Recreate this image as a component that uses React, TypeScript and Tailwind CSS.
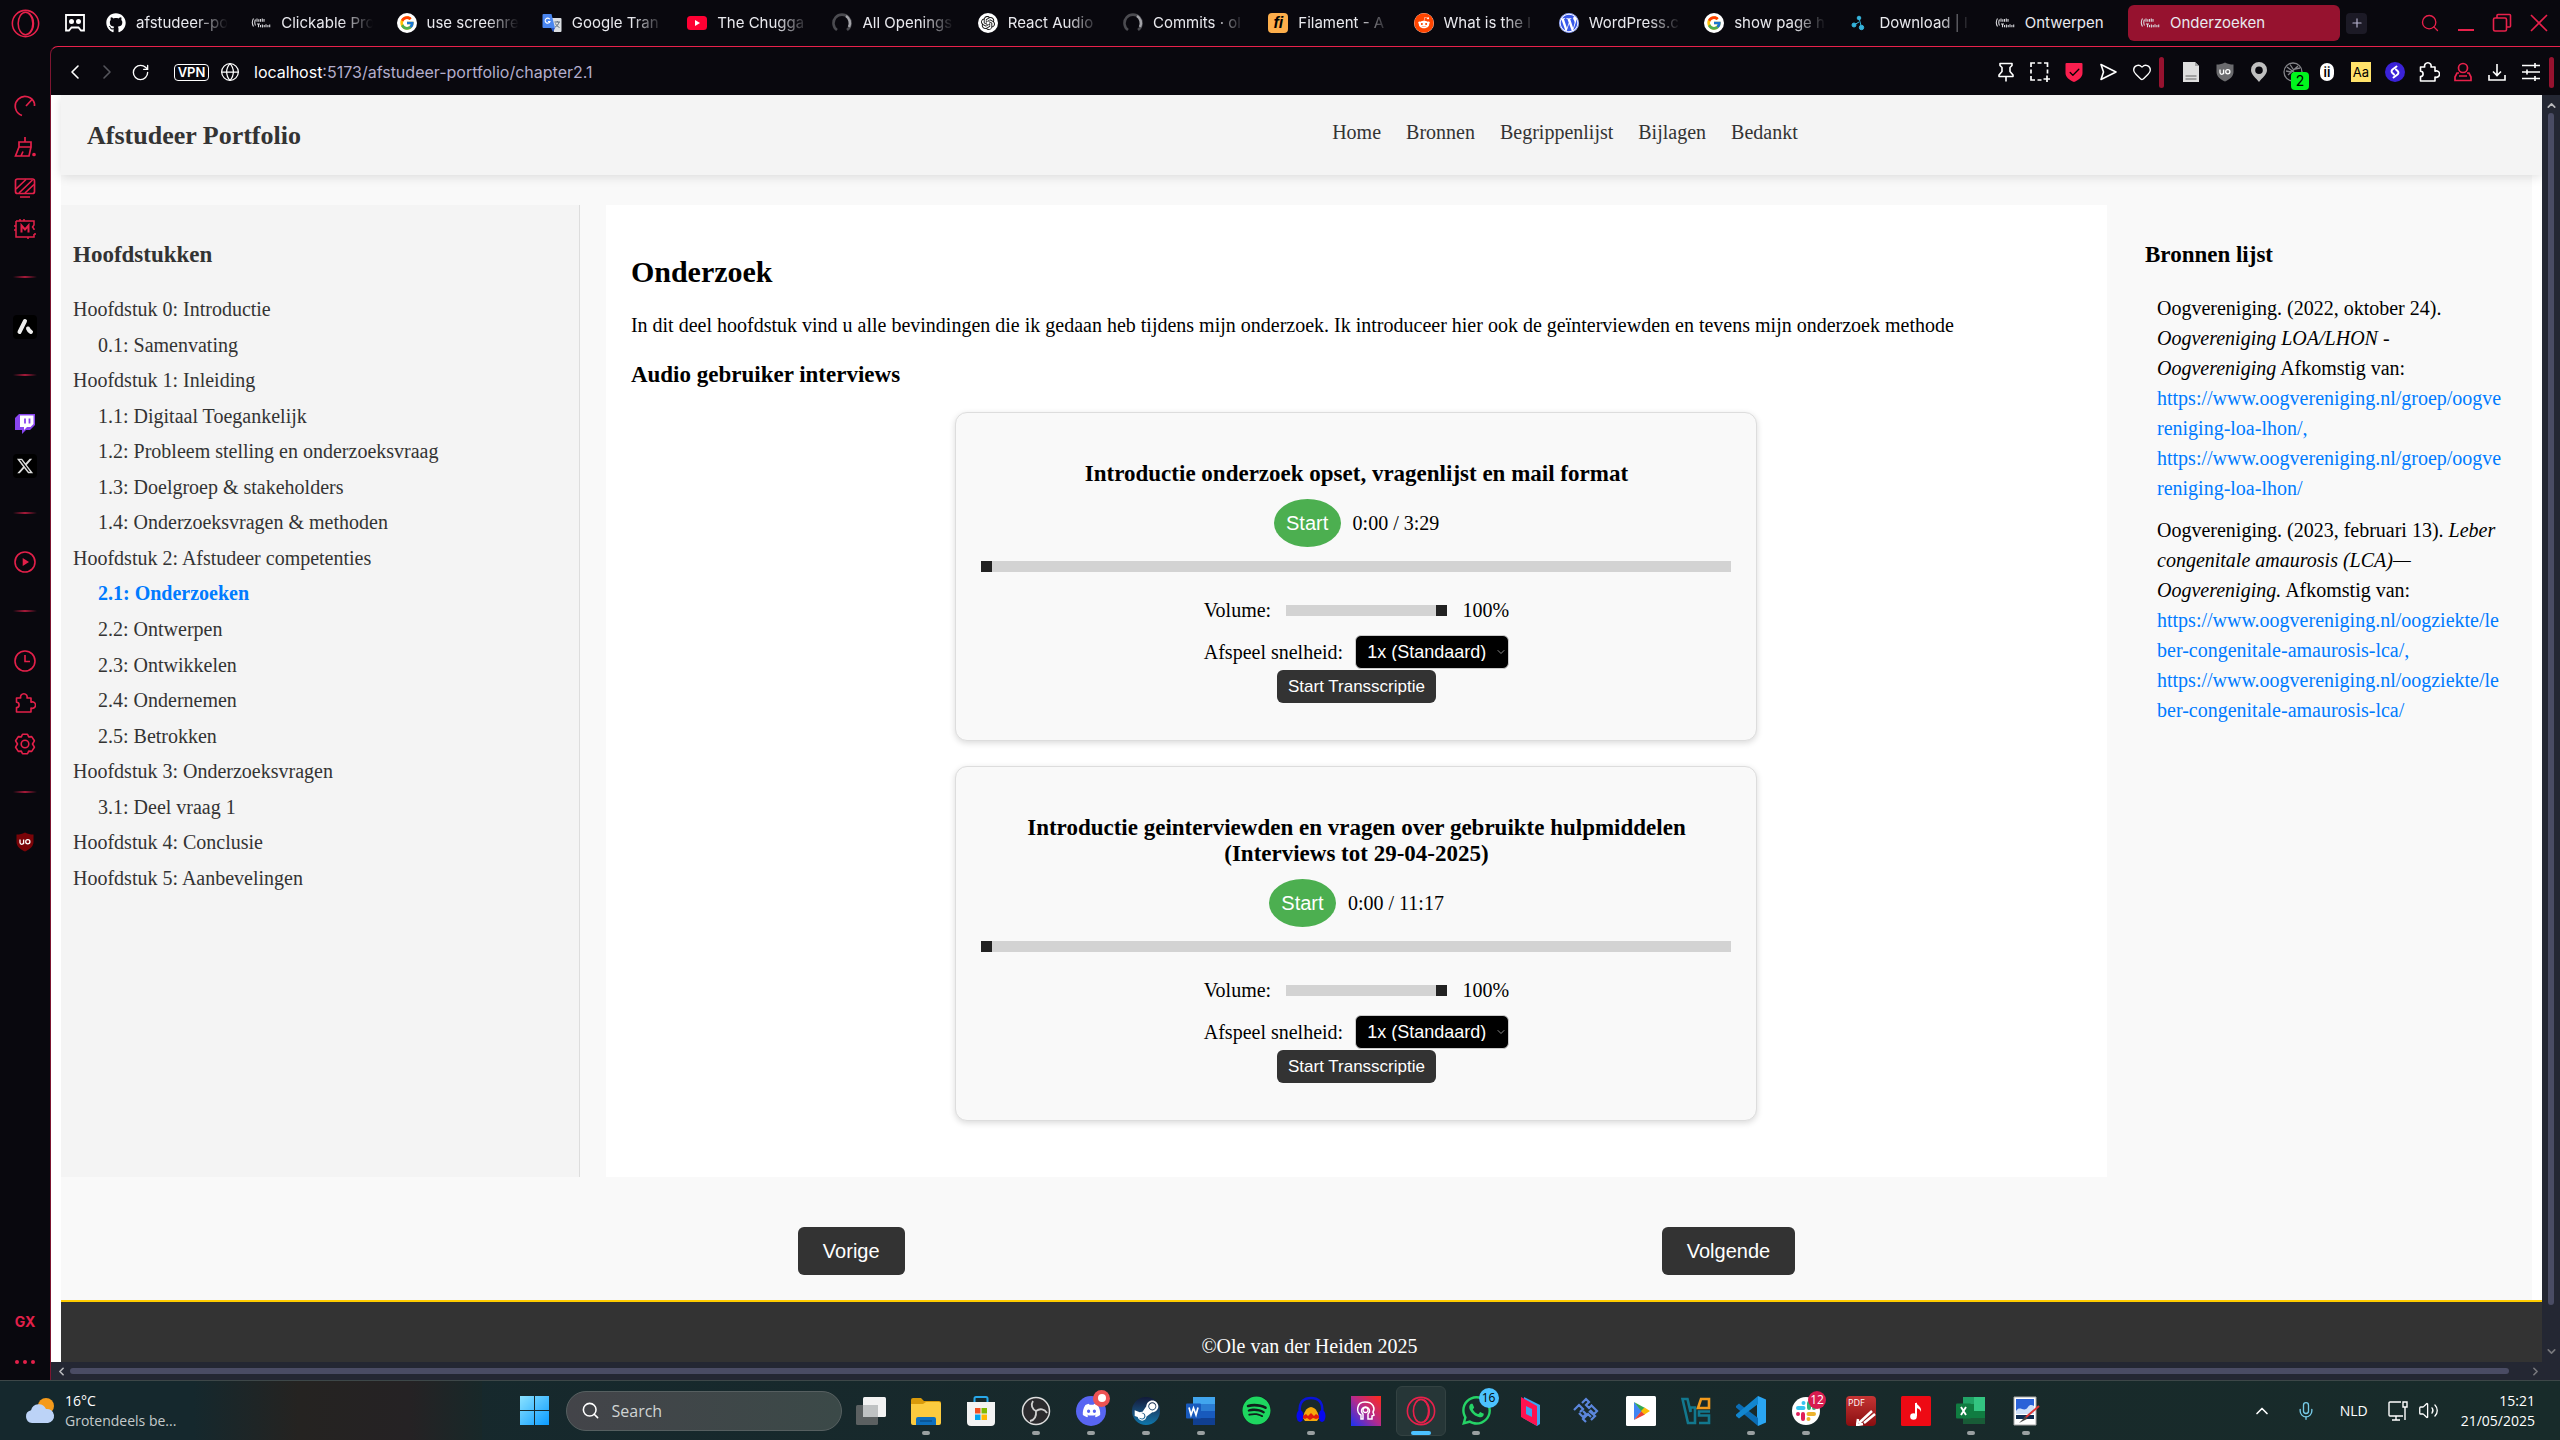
import type { ReactNode } from 'react';
import {
  ChevronLeft, ChevronRight, ChevronUp, ChevronDown, RotateCw, Globe, Search, X, Plus, Heart,
  Check, Mic, Volume2,
} from 'lucide-react';
import { FaGithub, FaReddit, FaWordpress, FaDiscord, FaSteamSymbol, FaSpotify, FaWhatsapp } from 'react-icons/fa';
import { FaXTwitter } from 'react-icons/fa6';
import { FcGoogle } from 'react-icons/fc';
import { SiOpenai } from 'react-icons/si';

/* ---------- small drawings ---------- */

const OperaRing = ({ size = 28 }: { size?: number }) => (
  <svg width={size} height={size} viewBox="0 0 30 30" fill="none" stroke="#e8214b" strokeWidth="1.6">
    <circle cx="15" cy="15" r="13.6" />
    <ellipse cx="15" cy="15" rx="7.6" ry="11.6" />
    <path d="M18 4c7 5 7 17 0 22" />
  </svg>
);

const PinnedFace = () => (
  <svg width="22" height="18" viewBox="0 0 22 18" fill="none" stroke="#fff" strokeWidth="1.8">
    <path d="M2 1h18v15.500h-3l-2.500-3h-7l-2.500 3H2z" />
    <circle cx="7.500" cy="7.500" r="1.600" fill="#fff" />
    <circle cx="14.500" cy="7.500" r="1.600" fill="#fff" />
  </svg>
);

const DigitalLogo = () => (
  <svg width="20" height="20" viewBox="0 0 20 20" fill="none" stroke="#d9d9dd" strokeWidth="1.100">
    <path d="M2.500 5.500c-1.500 2.500-1.500 5.500 0 8M4.500 6.500c-1 2-1 4 0 6" />
    <path d="M6 5.500v3.200M7.800 6.200v2.500M9.500 6v2.700M11.300 5.400v3.300M13 6v2.700" />
    <path d="M6 11h3M7.500 11v3.200M9.500 12v2.200M11.400 11.500v3M13.200 12v2.200M15 11.200v3M16.900 12v2.200M18.700 11.500v2.700" />
  </svg>
);

const TranslateLogo = () => (
  <svg width="20" height="20" viewBox="0 0 20 20">
    <path d="M8 5h10.500a1 1 0 011 1v12a1 1 0 01-1 1H12z" fill="#dcdfe3" />
    <path d="M1.500 1h8L13 15H1.500a1 1 0 01-1-1V2a1 1 0 011-1z" fill="#4a86f0" />
    <path d="M9 15h4l-2 4z" fill="#2a56c6" />
    <path d="M7.800 6.300A2.500 2.500 0 108 8.500H6" fill="none" stroke="#fff" strokeWidth="1.100" />
    <path d="M12.500 9h5.500M15.300 8v1M17 9c-.5 2.500-2 4-4 5.200M13.500 10.500c.8 1.800 2 3 4 4" fill="none" stroke="#5b6b7c" strokeWidth="1" />
  </svg>
);

const YoutubeLogo = () => (
  <svg width="20" height="20" viewBox="0 0 20 20">
    <rect x="0" y="3" width="20" height="14" rx="3.500" fill="#ff0033" />
    <path d="M8 7l5 3-5 3z" fill="#fff" />
  </svg>
);

const LoadingRing = () => (
  <svg width="20" height="20" viewBox="0 0 20 20" fill="none" strokeWidth="2.600">
    <path d="M5 17A8.500 8.500 0 1115 17" stroke="#4b4b50" />
    <path d="M14 3a8.500 8.500 0 013 11" stroke="#a3a3a8" />
  </svg>
);

const FilamentLogo = () => (
  <span className="flex size-5 items-center justify-center rounded-sm bg-[#fdae4b] font-['Liberation_Sans',sans-serif] text-base leading-none font-bold text-black italic">fi</span>
);

const DownloadLogo = () => (
  <svg width="20" height="20" viewBox="0 0 20 20" fill="#35b4dc" stroke="#35b4dc">
    <circle cx="10" cy="5" r="1.800" />
    <circle cx="5" cy="12" r="2" />
    <circle cx="12.500" cy="14.500" r="2.200" />
    <path d="M10 5l2.500 9.500M5 12l5-3" strokeWidth="1" />
  </svg>
);

const PuzzlePiece = () => (
  <svg width="22" height="22" viewBox="0 0 22 22" fill="none" stroke="currentColor" strokeWidth="1.600" strokeLinejoin="round">
    <path d="M2.500 6h4.200a3.300 3.300 0 116.300 0H17v4.200a3.200 3.200 0 110 5.800v4H2.500v-4.500a2.600 2.600 0 000-5.200z" />
  </svg>
);

const Shield = ({ fill, size = 20 }: { fill: string; size?: number }) => (
  <svg width={size} height={size} viewBox="0 0 20 20">
    <path d="M10 0.500c3 1.500 5 2 8.500 2V10c0 4.500-4 7.500-8.500 9.500C5.500 17.500 1.500 14.500 1.500 10V2.500c3.500 0 5.500-.5 8.500-2z" fill={fill} />
    <path d="M5 7.500v3a1.800 1.800 0 003.600 0v-3M8.600 7.500v4.500" fill="none" stroke="#fff" strokeWidth="1.300" />
    <circle cx="12.800" cy="9.700" r="2.100" fill="none" stroke="#fff" strokeWidth="1.300" />
  </svg>
);

/* ---------- tab strip ---------- */

type Tab = { icon: ReactNode; title: string; fade?: boolean };

const tabs: Tab[] = [
  { icon: <FaGithub size={20} color="#fff" />, title: 'afstudeer-po', fade: true },
  { icon: <DigitalLogo />, title: 'Clickable Pro', fade: true },
  { icon: <span className="flex size-5 items-center justify-center rounded-full bg-white"><FcGoogle size={16} /></span>, title: 'use screenre', fade: true },
  { icon: <TranslateLogo />, title: 'Google Tran', fade: true },
  { icon: <YoutubeLogo />, title: 'The Chugga', fade: true },
  { icon: <LoadingRing />, title: 'All Openings', fade: true },
  { icon: <span className="flex size-5 items-center justify-center rounded-full bg-white"><SiOpenai size={14} color="#111" /></span>, title: 'React Audio', fade: true },
  { icon: <LoadingRing />, title: 'Commits · ol', fade: true },
  { icon: <FilamentLogo />, title: 'Filament - A', fade: true },
  { icon: <span className="flex size-5 items-center justify-center rounded-full bg-white"><FaReddit size={20} color="#ff4500" /></span>, title: 'What is the l', fade: true },
  { icon: <span className="flex size-5 items-center justify-center rounded-full bg-white"><FaWordpress size={20} color="#3858e9" /></span>, title: 'WordPress.c', fade: true },
  { icon: <span className="flex size-5 items-center justify-center rounded-full bg-white"><FcGoogle size={16} /></span>, title: 'show page h', fade: true },
  { icon: <DownloadLogo />, title: 'Download | l', fade: true },
  { icon: <DigitalLogo />, title: 'Ontwerpen' },
];

function TabStrip() {
  return (
    <div className="flex h-[46px] items-center text-[15px] text-[#e9e9ee]">
      <button aria-label="Opera menu" className="flex w-[50px] justify-center"><OperaRing size={29} /></button>
      <button aria-label="Vastgezet tabblad" className="flex w-14 justify-center pr-1.5"><PinnedFace /></button>
      <div className="-mr-3 grid min-w-0 flex-1 grid-cols-14">
        {tabs.map((t, i) => (
          <button key={i} className="flex min-w-0 items-center gap-2.5 text-left">
            <span className="shrink-0">{t.icon}</span>
            <span className={t.fade ? 'w-[92px] overflow-hidden whitespace-nowrap [mask-image:linear-gradient(to_right,black_65%,transparent)]' : 'whitespace-nowrap'}>{t.title}</span>
          </button>
        ))}
      </div>
      <button className="relative flex h-9 w-[212px] items-center gap-2.5 rounded-md bg-[#96122f] pl-3 text-left">
        <DigitalLogo />Onderzoeken
      </button>
      <button aria-label="Nieuw tabblad" className="ml-1.5 flex size-[21px] items-center justify-center rounded-sm bg-[#1c1a26] text-[#b7b3cf]"><Plus size={14} /></button>
      <div className="ml-[53px] flex items-center gap-[18px] pr-3 text-[#e8214b]">
        <button aria-label="Zoeken"><Search size={20} strokeWidth={1.6} /></button>
        <button aria-label="Minimaliseren" className="flex h-4 items-end"><span className="block h-0.5 w-4 bg-current" /></button>
        <button aria-label="Herstellen">
          <svg width="20" height="20" viewBox="0 0 20 20" fill="none" stroke="currentColor" strokeWidth="1.600"><rect x="1.500" y="5" width="13" height="13" rx="1.500" /><path d="M5 5V2.500A1 1 0 016 1.500h11.500a1 1 0 011 1V13a1 1 0 01-1 1h-3" /></svg>
        </button>
        <button aria-label="Sluiten">
          <svg width="18" height="18" viewBox="0 0 18 18" fill="none" stroke="currentColor" strokeWidth="1.600"><path d="M1 1l16 16M17 1L1 17" /></svg>
        </button>
      </div>
    </div>
  );
}

/* ---------- address bar ---------- */

const extensions: { label: string; icon: ReactNode }[] = [
  { label: 'Leesmodus', icon: <svg width="18" height="20" viewBox="0 0 18 20"><path d="M1 0h12l4 4v16H1z" fill="#dedede" /><path d="M3.500 14h11M3.500 17h11" stroke="#8c8c8c" strokeWidth="1.400" /><path d="M13 0v4h4" fill="#a5a5a5" /></svg> },
  { label: 'uBlock', icon: <Shield fill="#6b6b6e" /> },
  { label: 'Locatie', icon: <svg width="18" height="20" viewBox="0 0 18 20"><path fillRule="evenodd" d="M9 0a8 8 0 018 8c0 4.500-5 8-8 12C6 16 1 12.500 1 8a8 8 0 018-8zm0 4.500a3.800 3.800 0 100 7.600 3.800 3.800 0 000-7.600z" fill="#bfbfbf" /></svg> },
  { label: 'Cookies', icon: (
    <span className="relative block">
      <svg width="20" height="20" viewBox="0 0 20 20" fill="none" stroke="#85858a" strokeWidth="1.300"><circle cx="10" cy="10" r="9" /><path d="M4 5l12 9M15 4L5 13M7 2.500l4 6M3 9l5 1M12 7l5-1" /></svg>
      <span className="absolute -right-1.5 -bottom-2 flex size-[18px] items-center justify-center rounded-sm bg-[#00f51d] text-sm leading-none text-black">2</span>
    </span>
  ) },
  { label: 'Info', icon: <span className="flex h-[18px] w-3.5 items-center justify-center rounded-full bg-white text-[13px] leading-none font-semibold text-black">ii</span> },
  { label: 'Lettertype', icon: <span className="flex size-5 items-center justify-center bg-[#ffe26a] text-[13px] leading-none text-black">Aa</span> },
  { label: 'Shazam', icon: <svg width="20" height="20" viewBox="0 0 20 20"><circle cx="10" cy="10" r="10" fill="#3a22d8" /><path d="M11.500 4.500L7.500 7.500a2.200 2.200 0 00-.3 3.300l1.800 1.700M8.500 15.500l4-3a2.200 2.200 0 00.3-3.300L11 7.500" fill="none" stroke="#fff" strokeWidth="2" strokeLinecap="round" /></svg> },
  { label: 'Extensies', icon: <PuzzlePiece /> },
  { label: 'Profiel', icon: <svg width="18" height="20" viewBox="0 0 18 20" fill="none" stroke="#e8214b" strokeWidth="1.700"><circle cx="9" cy="6" r="4.500" /><path d="M5 11H3l-2 4v3.500h16V15l-2-4h-2M5 14h8" /></svg> },
  { label: 'Downloads', icon: <svg width="18" height="18" viewBox="0 0 18 18" fill="none" stroke="currentColor" strokeWidth="1.600"><path d="M9 1v11M5 8.500L9 12.500l4-4M1 12v5h16v-5" /></svg> },
  { label: 'Instellingen', icon: <svg width="20" height="20" viewBox="0 0 20 20" stroke="currentColor" strokeWidth="1.600"><path d="M1 3.500h18M1 10h18M1 16.500h18M14 1v5M6 7.500v5M14 14v5" /></svg> },
];

const pageActions: { label: string; icon: ReactNode }[] = [
  { label: 'Vastpinnen', icon: <svg width="18" height="20" viewBox="0 0 18 20" fill="none" stroke="currentColor" strokeWidth="1.600" strokeLinejoin="round"><path d="M3 1.500h12v2l-2 2v4l3 3.500v1.500H2V13l3-3.500v-4l-2-2zM9 14.500v5" /></svg> },
  { label: 'Snapshot', icon: <svg width="20" height="20" viewBox="0 0 20 20" fill="none" stroke="currentColor" strokeWidth="1.700"><path d="M1 5V1h4M7.500 1h4M14 1h3.500v4M17.500 7.500v4M1 7.500v4M1 14v4h4M7.500 18h4M17 13.500V20M13.500 17H20" /></svg> },
  { label: 'Beveiliging', icon: <span className="relative flex items-center justify-center"><svg width="18" height="19" viewBox="0 0 18 19"><path d="M1.500 0h15a1 1 0 011 1v9c0 4-3.500 7-8.500 9C4 17 .5 14 .5 10V1a1 1 0 011-1z" fill="#fa1e4e" /></svg><Check size={13} strokeWidth={2.4} className="absolute text-black" /></span> },
  { label: 'Delen', icon: <svg width="18" height="18" viewBox="0 0 18 18" fill="none" stroke="currentColor" strokeWidth="1.600" strokeLinejoin="round"><path d="M2 1.500L17 9 2 16.500 4.500 9z" /></svg> },
  { label: 'Favoriet', icon: <Heart size={20} strokeWidth={1.6} /> },
];

function AddressBar() {
  return (
    <div className="flex h-12 items-center pt-0.5 pr-1.5 text-white">
      <button aria-label="Terug" className="ml-3"><ChevronLeft size={24} strokeWidth={1.6} /></button>
      <button aria-label="Vooruit" className="ml-2 text-[#55555c]"><ChevronRight size={24} strokeWidth={1.6} /></button>
      <button aria-label="Vernieuwen" className="ml-3"><RotateCw size={19} strokeWidth={1.7} /></button>
      <span className="ml-6 flex h-[17px] w-[35px] items-center justify-center rounded-sm border border-white text-[13px] leading-none font-semibold">VPN</span>
      <Globe size={20} strokeWidth={1.5} className="ml-[11px]" />
      <button className="ml-3.5 flex flex-1 text-left text-base">
        <span>localhost</span><span className="text-[#b3adcb]">:5173/afstudeer-portfolio/chapter2.1</span>
      </button>
      <div className="flex items-center">
        {pageActions.map((a) => (
          <button key={a.label} aria-label={a.label} className="flex w-[34px] justify-center">{a.icon}</button>
        ))}
        <span className="h-[31px] w-[5px] rounded-full bg-[#96122f]" />
        <div className="flex pr-px pl-2.5">
          {extensions.map((a) => (
            <button key={a.label} aria-label={a.label} className="flex w-[34px] items-center justify-center">{a.icon}</button>
          ))}
        </div>
        <span className="h-[31px] w-[5px] rounded-full bg-[#96122f]" />
      </div>
    </div>
  );
}

/* ---------- browser side rail ---------- */

const Divider = () => <span className="h-0.5 w-6 bg-linear-to-r from-transparent via-[#a81a3a] to-transparent" />;

const railItems: { h: string; node: ReactNode; label?: string }[] = [
  { h: 'h-10', label: 'GX Control', node: <svg width="22" height="22" viewBox="0 0 22 22" fill="none" stroke="currentColor" strokeWidth="1.700"><path d="M8 20.500A9.800 9.800 0 1120.500 8.500M12 11l6-6.500M20.500 8.500V11" /></svg> },
  { h: 'h-[41px]', label: 'Opschonen', node: <svg width="22" height="22" viewBox="0 0 22 22" fill="none" stroke="currentColor" strokeWidth="1.700"><path d="M11 1v5M5 6h12v5H5zM5 11l-3.500 9H15l2-9M7 20l2-4.500" /><circle cx="20" cy="18.500" r="1" fill="currentColor" /></svg> },
  { h: 'h-[41px]', label: 'Mods', node: <svg width="22" height="22" viewBox="0 0 22 22" fill="none" stroke="currentColor" strokeWidth="1.700"><rect x="1.500" y="2" width="19" height="14.500" rx="2" /><path d="M2 12L12 2.500M5 16L18.500 3M11 16l9-8.500M6 20h10" /></svg> },
  { h: 'h-[41px]', label: 'GX Market', node: <svg width="24" height="22" viewBox="0 0 24 22" fill="none" stroke="currentColor" strokeWidth="1.500"><path d="M3 3h18v4l-1.500 2 1.500 2v1M21 16v3H3V3M7 1v2M11 1v2M15 19v2M1 8h2M1 12h2M21 16h2" /><path d="M8.500 14.500V7.500l3.500 4 3.500-4v7" strokeWidth="2" /></svg> },
  { h: 'h-[55px]', node: <Divider /> },
  { h: 'h-[45px]', label: 'App', node: <span className="flex size-6 items-center justify-center rounded-sm bg-black"><svg width="18" height="18" viewBox="0 0 18 18" fill="none" stroke="#eee" strokeLinecap="round" strokeWidth="4"><path d="M9 3L3.500 14" /><path d="M12 10.500c.5 1.500 1.500 2.500 3 3.500" /></svg></span> },
  { h: 'h-[51px]', node: <Divider /> },
  { h: 'h-[47px]', label: 'Twitch', node: <svg width="20" height="20" viewBox="0 0 20 20"><path d="M4 0h16v11l-5 5h-4l-4 4v-4H0V4z" fill="#8844ee" /><path d="M5 1.500h13.500V10L15.500 13H12l-3 3v-3H5z" fill="#fff" /><path d="M10 4.500v5M14.500 4.500v5" stroke="#8844ee" strokeWidth="1.800" /></svg> },
  { h: 'h-[38px]', label: 'X', node: <span className="flex size-6 items-center justify-center rounded-sm bg-black text-[#dcdcdc]"><FaXTwitter size={18} /></span> },
  { h: 'h-14', node: <Divider /> },
  { h: 'h-[42px]', label: 'Speler', node: <svg width="22" height="22" viewBox="0 0 22 22" fill="none" stroke="currentColor" strokeWidth="1.600"><circle cx="11" cy="11" r="10" /><path d="M9.500 8.500v5l4-2.500z" fill="currentColor" /></svg> },
  { h: 'h-14', node: <Divider /> },
  { h: 'h-[43px]', label: 'Geschiedenis', node: <svg width="22" height="22" viewBox="0 0 22 22" fill="none" stroke="currentColor" strokeWidth="1.600"><circle cx="11" cy="11" r="10" /><path d="M11 5v6.500h5" /></svg> },
  { h: 'h-[41px]', label: 'Extensies', node: <PuzzlePiece /> },
  { h: 'h-[41px]', label: 'Instellingen', node: <svg width="22" height="22" viewBox="0 0 22 22" fill="none" stroke="currentColor" strokeWidth="1.600" strokeLinejoin="round"><path d="M8.500 1.200h5l1.200 2.700 3-.3 2.700 4.200L18.500 11l1.900 3.200-2.700 4.200-3-.3-1.200 2.700h-5l-1.200-2.700-3 .3-2.700-4.200L3.500 11 1.600 7.800l2.700-4.200 3 .3z" /><circle cx="11" cy="11" r="3.800" /></svg> },
  { h: 'h-[55px]', node: <Divider /> },
  { h: 'h-[45px]', label: 'uBlock', node: <Shield fill="#7a0408" /> },
];

function SideRail() {
  return (
    <nav aria-label="Zijbalk" className="flex w-[50px] shrink-0 flex-col items-center pt-10 text-[#e3204a]">
      {railItems.map((it, i) => (
        <div key={i} className={`${it.h} flex items-center`}>
          {it.label ? <button aria-label={it.label} className="block">{it.node}</button> : it.node}
        </div>
      ))}
      <button className="mt-auto text-sm leading-none font-bold">GX</button>
      <button aria-label="Meer" className="mt-[31px] mb-4 flex gap-1">
        <span className="size-1 rounded-full bg-current" />
        <span className="size-1 rounded-full bg-current" />
        <span className="size-1 rounded-full bg-current" />
      </button>
    </nav>
  );
}

/* ---------- portfolio page ---------- */

const chapters: { title: string; sub?: boolean; active?: boolean }[] = [
  { title: 'Hoofdstuk 0: Introductie' },
  { title: '0.1: Samenvating', sub: true },
  { title: 'Hoofdstuk 1: Inleiding' },
  { title: '1.1: Digitaal Toegankelijk', sub: true },
  { title: '1.2: Probleem stelling en onderzoeksvraag', sub: true },
  { title: '1.3: Doelgroep & stakeholders', sub: true },
  { title: '1.4: Onderzoeksvragen & methoden', sub: true },
  { title: 'Hoofdstuk 2: Afstudeer competenties' },
  { title: '2.1: Onderzoeken', sub: true, active: true },
  { title: '2.2: Ontwerpen', sub: true },
  { title: '2.3: Ontwikkelen', sub: true },
  { title: '2.4: Ondernemen', sub: true },
  { title: '2.5: Betrokken', sub: true },
  { title: 'Hoofdstuk 3: Onderzoeksvragen' },
  { title: '3.1: Deel vraag 1', sub: true },
  { title: 'Hoofdstuk 4: Conclusie' },
  { title: 'Hoofdstuk 5: Aanbevelingen' },
];

function AudioPlayer({ id, title, duration }: { id: string; title: string; duration: string }) {
  const range = 'h-[11px] cursor-pointer appearance-none bg-[#d3d3d3] [&::-webkit-slider-thumb]:size-[11px] [&::-webkit-slider-thumb]:appearance-none [&::-webkit-slider-thumb]:bg-[#222]';
  return (
    <article className="mx-auto flex w-full max-w-[802px] flex-col items-center rounded-xl border border-[#ddd] bg-[#f9f9f9] px-[25px] pt-12 pb-[37px] shadow-[0_2px_6px_rgba(0,0,0,0.15)]">
      <h4 className="text-center text-[23px] leading-[26px] font-bold">{title}</h4>
      <div className="mt-3 flex items-center gap-3">
        <button className="h-12 w-[67px] rounded-[50%] bg-[#4caf50] font-['Liberation_Sans',sans-serif] text-white">Start</button>
        <span>0:00 / {duration}</span>
      </div>
      <input aria-label="Voortgang" type="range" min="0" max="100" defaultValue="0" className={`${range} mt-3.5 w-full`} />
      <div className="mt-[27px] grid gap-y-[13px]">
        <div className="flex items-center justify-between">
          <label htmlFor={`${id}-volume`}>Volume:</label>
          <input id={`${id}-volume`} type="range" min="0" max="100" defaultValue="100" className={`${range} w-[161px]`} />
          <span>100%</span>
        </div>
        <div className="flex items-center gap-3">
          <label htmlFor={`${id}-speed`}>Afspeel snelheid:</label>
          <span className="relative flex items-center">
            <select id={`${id}-speed`} defaultValue="1" className="h-[34px] w-[154px] appearance-none rounded-md border border-[#ccc] bg-black pl-[11px] font-['Liberation_Sans',sans-serif] text-lg leading-none text-white">
              <option value="1">1x (Standaard)</option>
              <option value="1.5">1.5x</option>
              <option value="2">2x</option>
            </select>
            <ChevronDown size={12} className="pointer-events-none absolute right-0.5 text-[#8a8a8a]" />
          </span>
        </div>
      </div>
      <button className="mt-px h-[33px] rounded-md bg-[#333] px-[11px] font-['Liberation_Sans',sans-serif] text-[17px] text-white">Start Transscriptie</button>
    </article>
  );
}

function Source({ children, href }: { children: ReactNode; href: string }) {
  return (
    <li className="leading-[30px]">
      {children}
      <a href={href} className="block break-all text-[#007bff]">{href},</a>
      <a href={href} className="block break-all text-[#007bff]">{href}</a>
    </li>
  );
}

function Portfolio() {
  return (
    <div className="min-w-0 flex-1 overflow-hidden bg-white pl-2.5 font-['Liberation_Serif','Times_New_Roman',serif] text-xl leading-[23px] text-black">
      <header className="relative flex h-20 items-center justify-between bg-[#f4f4f4] pr-[30%] pl-[26px] text-[#333] shadow-[0_2px_10px_rgba(0,0,0,0.12)]">
        <h1 className="text-[26px] font-bold">Afstudeer Portfolio</h1>
        <nav className="flex gap-[25px] pb-1.5">
          {['Home', 'Bronnen', 'Begrippenlijst', 'Bijlagen', 'Bedankt'].map((n) => <a key={n} href="#">{n}</a>)}
        </nav>
      </header>

      <div className="mr-2.5 bg-[#f9f9f9] pt-[30px]">
        <div className="flex">
          <aside className="w-[21%] shrink-0 border-r border-[#ddd] bg-[#f4f4f4] px-3 pt-9 text-[#333]">
            <h3 className="text-[23px] leading-[27px] font-bold">Hoofdstukken</h3>
            <ul className="mt-6 grid h-[604px] auto-rows-fr items-center">
              {chapters.map((c) => (
                <li key={c.title} className={c.sub ? 'pl-[25px]' : ''}>
                  <a href="#" className={c.active ? 'font-bold text-[#007bff]' : ''}>{c.title}</a>
                </li>
              ))}
            </ul>
          </aside>
          <main className="ml-[26px] min-w-0 flex-1 bg-white px-[25px] pt-[50px] pb-[56px]">
            <h2 className="text-3xl leading-[34px] font-bold">Onderzoek</h2>
            <p className="mt-[25px]">In dit deel hoofdstuk vind u alle bevindingen die ik gedaan heb tijdens mijn onderzoek. Ik introduceer hier ook de geïnterviewden en tevens mijn onderzoek methode</p>
            <h3 className="mt-6 text-[23px] leading-[27px] font-bold">Audio gebruiker interviews</h3>
            <div className="mt-6 flex flex-col gap-[25px]">
              <AudioPlayer id="intro" title="Introductie onderzoek opset, vragenlijst en mail format" duration="3:29" />
              <AudioPlayer id="tools" title="Introductie geinterviewden en vragen over gebruikte hulpmiddelen (Interviews tot 29-04-2025)" duration="11:17" />
            </div>
          </main>
          <aside className="w-[425px] shrink-0 pt-9 pr-[25px] pl-[38px]">
            <h3 className="text-[23px] leading-[27px] font-bold">Bronnen lijst</h3>
            <ul className="mt-[25px] flex flex-col gap-3 pl-3">
              <Source href="https://www.oogvereniging.nl/groep/oogvereniging-loa-lhon/">
                Oogvereniging. (2022, oktober 24). <em>Oogvereniging LOA/LHON - Oogvereniging</em> Afkomstig van:
              </Source>
              <Source href="https://www.oogvereniging.nl/oogziekte/leber-congenitale-amaurosis-lca/">
                Oogvereniging. (2023, februari 13). <em>Leber congenitale amaurosis (LCA)—Oogvereniging.</em> Afkomstig van:
              </Source>
            </ul>
          </aside>
        </div>
        <div className="mx-auto flex w-[71%] justify-around pt-[50px] pb-[25px] font-['Liberation_Sans',sans-serif] text-white">
          <button className="h-12 rounded-md bg-[#333] px-[25px]">Vorige</button>
          <button className="h-12 rounded-md bg-[#333] px-[25px]">Volgende</button>
        </div>
      </div>
      <footer className="border-t-2 border-[#ffcc00] bg-[#333] pt-[33px] pb-10 pl-4 text-center text-white">©Ole van der Heiden 2025</footer>
    </div>
  );
}

/* ---------- taskbar ---------- */

type App = { name: string; icon: ReactNode; running?: boolean; active?: boolean; badge?: ReactNode };

const apps: App[] = [
  { name: 'Taakweergave', icon: <svg width="30" height="30" viewBox="0 0 30 30"><rect x="0" y="9" width="22" height="20" rx="1.500" fill="#5b6061" /><rect x="7" y="1" width="23" height="20" rx="1.500" fill="#f2f2f2" /><rect x="7" y="9" width="15" height="12" fill="#bfc2c3" /></svg> },
  { name: 'Verkenner', running: true, icon: <svg width="30" height="30" viewBox="0 0 30 30"><path d="M0 4a2 2 0 012-2h8l3 3h15a2 2 0 012 2v4H0z" fill="#d99a0b" /><path d="M0 8h12l3-2h13a2 2 0 012 2v19a2 2 0 01-2 2H2a2 2 0 01-2-2z" fill="#fccb3f" /><path d="M5 29v-6a2 2 0 012-2h16a2 2 0 012 2v6z" fill="#0d6fbe" /><path d="M9 25h12" stroke="#0a4f8c" strokeWidth="1.500" /></svg> },
  { name: 'Store', icon: <svg width="30" height="30" viewBox="0 0 30 30"><path d="M8.500 7V2.500A1.500 1.500 0 0110 1h10a1.500 1.500 0 011.500 1.500V7" fill="none" stroke="#28a8ea" strokeWidth="2" /><path d="M1 6h28v20a4 4 0 01-4 4H5a4 4 0 01-4-4z" fill="#f3f3f3" /><path d="M9 12h5.500v5.500H9z" fill="#f25022" /><path d="M15.500 12H21v5.500h-5.500z" fill="#7fba00" /><path d="M9 18.500h5.500V24H9z" fill="#00a4ef" /><path d="M15.500 18.500H21V24h-5.500z" fill="#ffb900" /></svg> },
  { name: 'OBS', running: true, icon: <svg width="30" height="30" viewBox="0 0 30 30"><circle cx="15" cy="15" r="13.500" fill="#2b2a2d" stroke="#ddd" strokeWidth="1.500" /><path d="M12 5c-2.500 4-1 8 3 10M26 17c-2.500-4-7-5-11-2M9 25c4.500-1 6.500-5 6-10" fill="none" stroke="#cfcfcf" strokeWidth="1.800" /></svg> },
  { name: 'Discord', running: true, icon: <span className="flex size-[30px] items-center justify-center rounded-full bg-[#5865f2] text-white"><FaDiscord size={19} /></span>, badge: <span className="absolute -top-1.5 -right-1 flex size-[17px] items-center justify-center rounded-full bg-[#ed5353]"><span className="size-2 rounded-full bg-white" /></span> },
  { name: 'Steam', running: true, icon: <span className="flex size-7 items-center justify-center rounded-full bg-linear-to-b from-[#111a3a] to-[#0b78ad] text-white"><FaSteamSymbol size={27} /></span> },
  { name: 'Word', running: true, icon: <svg width="30" height="30" viewBox="0 0 30 30"><path d="M7 1h22v7H7z" fill="#41a5ee" /><path d="M7 8h22v7H7z" fill="#2b7cd3" /><path d="M7 15h22v7H7z" fill="#185abd" /><path d="M7 22h22v7H7z" fill="#103f91" /><rect x="0" y="7.500" width="15" height="15" rx="1" fill="#185abd" /><path d="M3 11.500l2 7.500 2.500-7 2.500 7 2-7.500" fill="none" stroke="#fff" strokeWidth="1.700" /></svg> },
  { name: 'Spotify', icon: <span className="flex items-center justify-center rounded-full bg-[#10201c] text-[#1ed760]"><FaSpotify size={29} /></span> },
  { name: 'Audacity', running: true, icon: <svg width="30" height="30" viewBox="0 0 30 30"><path d="M4 17C2 5 9 2 15 2s13 3 11 15" fill="none" stroke="#0a14d8" strokeWidth="2.500" /><ellipse cx="4" cy="20" rx="3.500" ry="6" fill="#0708ee" /><ellipse cx="26" cy="20" rx="3.500" ry="6" fill="#0708ee" /><path d="M7 22c1-6 3-10 8-11 5 1 7 5 8 11l-2 3H9z" fill="#f5a80c" /><path d="M7 20l3-2 2 2 3-3 3 3 2-2 3 2v2l-3 1-3-1-3 2-3-2-2 1-2-1z" fill="#e01b0c" /></svg> },
  { name: 'AI', icon: <svg width="30" height="30" viewBox="0 0 30 30"><defs><linearGradient id="ai" x1="0" y1="1" x2="1" y2="0"><stop offset="0" stopColor="#1733f5" /><stop offset=".5" stopColor="#b52a8c" /><stop offset="1" stopColor="#ff2a1a" /></linearGradient></defs><path d="M0 0h30v30H0z" fill="url(#ai)" /><path d="M10 23v-4C5 17 5 6 14 6s10 7 8 10l1 3-2 1v3h-4v-5a4 4 0 10-5 0v5z" fill="none" stroke="#fff" strokeWidth="1.500" /><circle cx="14.500" cy="14" r="2.500" fill="none" stroke="#fff" strokeWidth="1.300" /></svg> },
  { name: 'Opera GX', active: true, icon: <OperaRing size={30} /> },
  { name: 'WhatsApp', running: true, icon: <FaWhatsapp size={33} color="#25d366" />, badge: <span className="absolute -top-1.5 -right-1.5 flex size-5 items-center justify-center rounded-full bg-[#4cc2ff] text-xs leading-none text-black">16</span> },
  { name: 'Parsec', icon: <svg width="30" height="30" viewBox="0 0 30 30"><path d="M8 1l16 8v19l-3 2-14-8z" fill="#3aa4f2" /><path fillRule="evenodd" d="M5 1l16 9v20L5 21zM10 10v8l6 3v-8z" fill="#ff1250" /></svg> },
  { name: 'PCSX2', icon: <svg width="30" height="30" viewBox="0 0 30 30" fill="none" stroke="#5b86dc" strokeWidth="2.200"><path d="M3 14l5-5 4 4-3 3M11 7l4-4 3 3-3 3 3 3 3-3M20 9l6 6-3 3-4-4M8 17l4 4 3-3-3-3M15 26l-3-3 5-5 3 3M18 15l6 5-4 4" /></svg> },
  { name: 'Play Games', icon: <svg width="30" height="30" viewBox="0 0 30 30"><rect width="30" height="30" rx="1.500" fill="#fff" /><path d="M8 6v18l8-9z" fill="#4285f4" /><path d="M8 6l11 6-3.500 3.500z" fill="#34a853" /><path d="M8 24l7.500-9L19 18.500z" fill="#ea4335" /><path d="M18.500 11.500L24 15l-5.500 3.500L15 15z" fill="#fbbc04" /></svg> },
  { name: 'VS', icon: <svg width="30" height="30" viewBox="0 0 30 30" fill="none" strokeWidth="2.600"><path d="M1.500 3h5l3 13V11.500H14V27H7z" stroke="#12788e" /><path d="M29 15.500H18v4h10V27H18" stroke="#12788e" /><path d="M20 3h8v9H17z" stroke="#f39a1c" /></svg> },
  { name: 'VS Code', running: true, icon: <svg width="30" height="30" viewBox="0 0 30 30"><path d="M22 0l8 3.500v23L22 30l-1-9V9z" fill="#2aa5f2" /><path d="M0 10l3-2.500L22 22v8L0 11.500z" fill="#0b6db5" /><path d="M0 20l3 2.500L22 8V0L0 18.500z" fill="#1286cf" /></svg> },
  { name: 'Slack', running: true, icon: <span className="flex size-7 items-center justify-center rounded-full bg-white"><svg width="22" height="22" viewBox="0 0 22 22" strokeWidth="4" strokeLinecap="round"><path d="M8.500 3v0M3 8h5.500" stroke="#36c5f0" /><path d="M14 3v5M19 8v0" stroke="#2eb67d" /><path d="M13.500 14H19M13.500 19v0" stroke="#ecb22e" /><path d="M8 14v5M3 14v0" stroke="#e01e5a" /></svg></span>, badge: <span className="absolute -top-1.5 -right-1.5 flex size-[18px] items-center justify-center rounded-full bg-[#d81b4f] text-xs leading-none text-white">12</span> },
  { name: 'PDF', icon: <span className="relative flex size-[30px] rounded-sm bg-linear-to-b from-[#c63434] to-[#8a0d10] pt-0.5 pl-0.5 text-[9px] leading-none text-white">PDF<svg width="20" height="18" viewBox="0 0 20 18" className="absolute right-0 bottom-0" fill="none" stroke="#fff" strokeWidth="2.500"><path d="M3 15L16 3M8 15L19 6M2 11l-1 6 6-1" /></svg></span> },
  { name: 'Muziek', icon: <svg width="30" height="30" viewBox="0 0 30 30"><rect width="30" height="30" rx="1.500" fill="#ee0a14" /><path d="M15 7v13" stroke="#fff" strokeWidth="2" /><circle cx="12.500" cy="20.500" r="3.300" fill="#fff" /><path d="M15 6c1 4 6 4 5 10-1-3-3-4-5-4z" fill="#fff" /></svg> },
  { name: 'Excel', running: true, icon: <svg width="30" height="30" viewBox="0 0 30 30"><path d="M7 1h11v14H7z" fill="#21a366" /><path d="M18 1h11v7H18zM18 8h11v7H18z" fill="#33c481" /><path d="M7 8h11v14H7z" fill="#107c41" /><path d="M18 15h11v7H18z" fill="#107c41" /><path d="M7 22h22v6H7z" fill="#185c37" /><rect x="0" y="7.500" width="15" height="15" rx="1" fill="#107c41" /><path d="M5 11l5 8M10 11l-5 8" stroke="#fff" strokeWidth="1.900" /></svg> },
  { name: 'Paint', running: true, icon: <svg width="30" height="30" viewBox="0 0 30 30"><path d="M3 1h22v28H3z" fill="#fff" stroke="#a9a9a9" /><path d="M5 3h18v13H5z" fill="#2b62d8" /><path d="M5 15c4-6 8 2 12-4 2-3 4-2 6-1v8H5z" fill="#cfe0fa" /><path d="M5 19h18v4H5z" fill="#0e2b52" /><path d="M28 10L14 22" stroke="#d33" strokeWidth="2" /><path d="M15 20l-7 7 8-4z" fill="#444" /></svg> },
];

function Taskbar() {
  return (
    <footer className="flex h-[60px] shrink-0 items-center border-t border-[#3d4748] bg-linear-to-r from-[#15282d] via-[#18292b] to-[#182b2a] font-['Open_Sans','Noto_Sans',sans-serif] text-white">
      <div className="flex h-full flex-1 items-center bg-[linear-gradient(to_right,#15282d_40%,#252321_62%,#252224_85%,#182829)]">
        <button className="flex items-center gap-2.5 pl-[25px] text-left text-sm leading-5">
          <svg width="30" height="30" viewBox="0 0 30 30"><circle cx="21" cy="10" r="8" fill="#f59a1b" /><path d="M7 27a6.500 6.500 0 01-1-12.800A8 8 0 0121 13a7 7 0 012 14z" fill="#bcd3f7" /></svg>
          <span>16°C<br /><span className="text-[#c4cacb]">Grotendeels be...</span></span>
        </button>
      </div>
      <div className="flex items-center pl-[38px]">
        <button aria-label="Start" className="mr-[17px]">
          <svg width="29" height="29" viewBox="0 0 29 29"><defs><linearGradient id="win" x1="0" y1="0" x2="1" y2="1"><stop offset="0" stopColor="#8be2ff" /><stop offset="1" stopColor="#0a9bff" /></linearGradient></defs><path d="M0 0h14v14H0zM15 0h14v14H15zM0 15h14v14H0zM15 15h14v14H15z" fill="url(#win)" /></svg>
        </button>
        <div className="mr-0.5 flex h-10 w-[276px] items-center gap-3 rounded-full border border-[#565f60] bg-[#3c4647] bg-linear-to-r from-[#434449] to-[#3b4948] pl-3.5">
          <Search size={19} strokeWidth={2} />
          <input type="search" aria-label="Search" placeholder="Search" className="w-40 bg-transparent text-base outline-none placeholder:text-[#d0d4d4]" />
        </div>
        <div className="flex items-center">
          {apps.map((a) => (
            <button key={a.name} aria-label={a.name} className="relative flex w-[55px] items-center justify-center">
              <span className={a.active ? 'flex size-[50px] items-center justify-center rounded-md border border-[#334242] bg-[#263637]' : 'flex h-[50px] items-center'}>
                <span className="relative">{a.icon}{a.badge}</span>
              </span>
              {a.active && <span className="absolute bottom-px h-1 w-5 rounded-full bg-[#4cc2ff]" />}
              {a.running && <span className="absolute bottom-px h-1 w-2 rounded-full bg-[#9aa0a1]" />}
            </button>
          ))}
        </div>
      </div>
      <div className="flex flex-1 items-center justify-end pr-[25px]">
        <button aria-label="Verborgen pictogrammen" className="mr-6"><ChevronUp size={20} /></button>
        <button aria-label="Microfoon" className="mr-6 text-[#76cbe8]"><Mic size={20} strokeWidth={1.6} /></button>
        <button className="mr-5 text-sm">NLD</button>
        <button aria-label="Netwerk" className="mr-2.5">
          <svg width="20" height="20" viewBox="0 0 20 20" fill="none" stroke="#fff" strokeWidth="1.400"><path d="M13 1H2a1 1 0 00-1 1v12a1 1 0 001 1h13M8 15v4M4 19h8M15 1h4v5h-4zM17 6v13" /></svg>
        </button>
        <button aria-label="Volume" className="mr-[22px]"><Volume2 size={21} strokeWidth={1.5} /></button>
        <time className="text-right text-sm leading-5">15:21<br />21/05/2025</time>
      </div>
    </footer>
  );
}

export default function App() {
  return (
    <div className="flex h-screen flex-col overflow-hidden bg-[#09080e] font-['Inter',sans-serif]">
      <TabStrip />
      <div className="flex min-h-0 flex-1">
        <SideRail />
        <div className="flex min-w-0 flex-1 flex-col rounded-tl-lg border-t border-l border-t-[#e8214b] border-l-[#7d1530]">
          <AddressBar />
          <div className="flex min-h-0 flex-1">
            <div className="flex min-w-0 flex-1 flex-col bg-[#242733]">
              <div className="flex min-h-0 flex-1"><Portfolio /></div>
              <div className="flex h-[18px] shrink-0 items-center justify-between pl-1 text-[#b9b9bd]">
                <ChevronLeft size={13} strokeWidth={3} />
                <span className="ml-0.5 h-1.5 flex-1 rounded-full bg-[#4a4c64]" />
                <ChevronRight size={13} strokeWidth={3} className="ml-5 text-[#77777c]" />
              </div>
            </div>
            <div className="flex w-[18px] shrink-0 flex-col items-center bg-[#242733] pt-1 pb-[22px] text-[#b9b9bd]">
              <ChevronUp size={13} strokeWidth={3} />
              <span className="mt-px mb-10 w-1.5 flex-1 rounded-full bg-[#4a4c64]" />
              <ChevronDown size={13} strokeWidth={3} className="text-[#77777c]" />
            </div>
          </div>
        </div>
      </div>
      <Taskbar />
    </div>
  );
}
